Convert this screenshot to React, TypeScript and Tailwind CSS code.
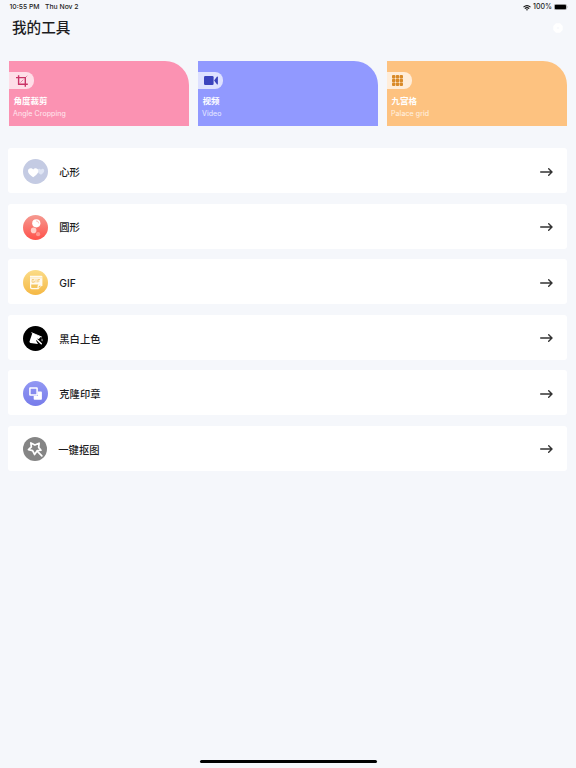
import type { ReactNode } from "react"

interface ToolCard {
    title: string
    subtitle: string
    color: string
    icon: ReactNode
}

interface ToolRow {
    title: string
    icon: ReactNode
    small?: boolean
}

const cards: ToolCard[] = [
    {
        title: "角度裁剪",
        subtitle: "Angle Cropping",
        color: "bg-[#fb92b2]",
        icon: (
            <svg className="ml-[7px] h-3 w-3" viewBox="0 0 12 12" fill="none" stroke="#c93468">
                <path d="M0 2.6h9.3v9.2M2.6.3v8.9h9.2" strokeWidth="1.4" />
                <path d="M4.4 7.6L7.4 4.6M10 2L11.3.7" strokeWidth=".5" />
            </svg>
        ),
    },
    {
        title: "视频",
        subtitle: "Video",
        color: "bg-[#9199ff]",
        icon: (
            <svg className="ml-[6px] h-[9px] w-[14px]" viewBox="0 0 14 9" fill="#3b43bd">
                <rect width="9.6" height="9" rx="1.2" />
                <path d="M10.1 4.5L12.9.8q1-.7 1 .5v6.4q0 1.2-1 .5z" />
            </svg>
        ),
    },
    {
        title: "九宫格",
        subtitle: "Palace grid",
        color: "bg-[#fdc280]",
        icon: (
            <svg className="ml-[5px] h-[11px] w-[11px]" viewBox="0 0 11 11" fill="#d98a28">
                {[0, 3.8, 7.6].map((y) =>
                    [0, 3.8, 7.6].map((x) => <rect key={`${x}-${y}`} x={x} y={y} width="3.4" height="3.4" rx="1" />)
                )}
            </svg>
        ),
    },
]

const rows: ToolRow[] = [
    {
        title: "心形",
        icon: (
            <>
                <circle cx="12.5" cy="12.5" r="12.5" fill="#c4cbe3" />
                <path d="M18 15.8c-2.2-1.6-3.6-2.7-3.6-4.3 0-2 2.4-2.6 3.6-.8 1.1-1.8 3.2-1 3.2.8 0 1.6-1.3 2.8-3.2 4.3z" fill="#dfe5f4" />
                <path d="M10.2 18.3C7.3 16 5 14.2 5 11.9c0-3 3.7-3.7 5.2-1.3 1.5-2.4 5.1-1.7 5.1 1.3 0 2.3-2.2 4.1-5.1 6.4z" fill="#fff" />
            </>
        ),
    },
    {
        title: "圆形",
        icon: (
            <>
                <linearGradient id="red" x1="0" y1="0" x2="0" y2="1">
                    <stop stopColor="#f59a91" />
                    <stop offset="1" stopColor="#ff514a" />
                </linearGradient>
                <circle cx="12.5" cy="12.5" r="12.5" fill="url(#red)" />
                <circle cx="13.3" cy="8.3" r="4.1" fill="#fff" />
                <path d="M13 5.9a2.6 2.6 0 0 1 2.7 2.5" fill="none" stroke="#f9a59d" strokeWidth=".7" />
                <circle cx="10.6" cy="15.4" r="2.8" fill="#ffd0ca" />
                <circle cx="15.1" cy="19.2" r="2.1" fill="#ff9891" />
            </>
        ),
    },
    {
        title: "GIF",
        icon: (
            <>
                <linearGradient id="yellow" x1="0" y1="0" x2="0" y2="1">
                    <stop stopColor="#fbdc88" />
                    <stop offset="1" stopColor="#f5b844" />
                </linearGradient>
                <circle cx="12.5" cy="12.5" r="12.5" fill="url(#yellow)" />
                <path d="M7 5.8h11.4q1 0 1 1v8.4l-4 4H8.7q-1.7 0-1.7-1.7z" fill="#fffaf0" />
                <path d="M6.6 7.8h12.8" stroke="#f8d57f" strokeWidth=".5" />
                <path d="M8.2 14.4h7.2q-.9.8-.9 2v1.7H9.3q-1.1 0-1.1-1.2z" fill="#f5c65e" />
                <path d="M15.7 18.2v-1.5q0-.9.9-.9h1.6z" fill="#f5c65e" />
                <path d="M11.3 9.5H9.1v2.8h2.2v-1.4h-.9M13 9.2v3.3M14.8 12.5v-3h2.2M14.8 11h1.7" fill="none" stroke="#f2be59" strokeWidth=".7" />
            </>
        ),
    },
    {
        title: "黑白上色",
        icon: (
            <>
                <circle cx="12.5" cy="12.5" r="12.5" fill="#000" />
                <path d="M9.4 7l8.6 3.8-4.6 4.4 1.6 2.9-7.6-1.2q-1.2-.3-.9-1.3z" fill="#fff" />
                <path d="M8.8 6.8l9.7 4.1" stroke="#fff" strokeWidth=".9" strokeLinecap="round" />
                <path d="M13.9 13.4l4.9 4.3" stroke="#000" strokeWidth="2.6" />
                <path d="M13.6 13.2l4.7 4.5" stroke="#fff" strokeWidth="1.5" strokeLinecap="round" />
                <path d="M18.9 12.3c1.3 1.6 1.3 2.7.2 3.2-1.1-.7-1.1-1.7-.2-3.2z" fill="#888" />
            </>
        ),
    },
    {
        title: "克隆印章",
        icon: (
            <>
                <linearGradient id="blue" x1="0" y1="0" x2="0" y2="1">
                    <stop stopColor="#9298f3" />
                    <stop offset="1" stopColor="#777cea" />
                </linearGradient>
                <circle cx="12.5" cy="12.5" r="12.5" fill="url(#blue)" />
                <rect x="6.9" y="6.9" width="7.2" height="7.2" rx=".4" fill="none" stroke="#fff" strokeWidth="1.5" />
                <path d="M14.9 10.6h3.2q.8 0 .8.8V18q0 .8-.8.8h-6.6q-.8 0-.8-.8v-3.1h4.2z" fill="#fff" />
            </>
        ),
    },
    {
        title: "一键抠图",
        small: true,
        icon: (
            <>
                <circle cx="12.5" cy="12.5" r="12.5" fill="#858585" />
                <path
                    d="M8.2 6.2l4.2 2.2 4.4-1.9-.5 4.3 2.4 3-3.9.4-2.8 4-2-4-4.3-1.1 3-2.9z"
                    fill="none"
                    stroke="#fff"
                    strokeWidth="1.8"
                    strokeLinejoin="round"
                />
                <path d="M14.8 14.8l4.8 4.8" stroke="#fff" strokeWidth="1.8" strokeLinecap="round" />
            </>
        ),
    },
]

function StatusBar() {
    return (
        <div className="flex h-[14px] items-center justify-between pt-[1px] pr-2 pl-[9.5px] text-[6.8px] font-medium text-[#222]">
            <div className="flex gap-[5.5px]">
                <span>10:55 PM</span>
                <span>Thu Nov 2</span>
            </div>
            <div className="flex items-center gap-[2px]">
                <svg className="h-[6px] w-[8px]" viewBox="0 0 8 6" fill="none" stroke="#111" strokeWidth="1.1">
                    <path d="M.5 2.1q3.5-3 7 0M1.8 3.6q2.2-1.9 4.4 0" />
                    <path d="M4 5.8L2.9 4.6q1.1-.8 2.2 0z" fill="#111" stroke="none" />
                </svg>
                <span className="text-[7px]">100%</span>
                <svg className="mb-[1px] h-[6px] w-[14px]" viewBox="0 0 14 6">
                    <rect x=".25" y=".25" width="12.3" height="5.5" rx="1.5" fill="none" stroke="#777" strokeWidth=".5" />
                    <rect x=".8" y=".7" width="11.2" height="4.6" rx="1" fill="#000" />
                    <path d="M13 2q1 1 0 2z" fill="#888" />
                </svg>
            </div>
        </div>
    )
}

export default function App() {
    return (
        <div className="flex h-screen flex-col overflow-hidden bg-[#f5f7fb] font-[Inter,'Noto_Sans_CJK_SC',sans-serif] text-[#1d1d1f]">
            <StatusBar />
            <header className="flex h-[28px] items-center justify-between pr-[13px] pl-[12px]">
                <h1 className="pt-[2px] text-[14.6px] font-medium">我的工具</h1>
                <svg className="h-[10px] w-[10px]" viewBox="0 0 10 10">
                    <path d="M3 .3h4L9.7 3v4L7 9.7H3L.3 7V3z" fill="#fff" />
                    <circle cx="5" cy="5" r="1.3" fill="#f9fafd" />
                </svg>
            </header>

            <div className="mt-[19px] grid h-[64.5px] shrink-0 grid-cols-3 gap-[9px] px-[9px]">
                {cards.map((card) => (
                    <div key={card.title} className={`rounded-tr-[24px] pt-[11px] text-white ${card.color}`}>
                        <div className="flex h-[17px] w-[25px] items-center rounded-r-[8px] bg-white/70">{card.icon}</div>
                        <div className="mt-[6px] pl-[4.5px] text-[8.5px] leading-[12px] font-bold">{card.title}</div>
                        <div className="mt-[1px] pl-[4px] text-[7px] leading-[11px] tracking-[0.1px] text-white/80">{card.subtitle}</div>
                    </div>
                ))}
            </div>

            <div className="mt-[22.5px] flex flex-col gap-[10.6px] pr-[9px] pl-[8px]">
                {rows.map((row) => (
                    <div key={row.title} className="flex h-[45px] items-center rounded-[3px] bg-white pt-[2px] pr-[14px] pl-[15px]">
                        <svg className={`shrink-0 ${row.small ? "mb-[1px] h-6 w-6" : "h-[25px] w-[25px]"}`} viewBox="0 0 25 25">
                            {row.icon}
                        </svg>
                        <span className="ml-[11.3px] flex-1 pt-[2px] text-[10.3px] font-medium">{row.title}</span>
                        <svg className="h-[8px] w-[13px]" viewBox="0 0 13 8" fill="none" stroke="#333" strokeWidth="1.4">
                            <path d="M.7 4h11.2M8.7.8L12 4 8.7 7.2" strokeLinecap="round" strokeLinejoin="round" />
                        </svg>
                    </div>
                ))}
            </div>

            <div className="mt-auto mb-[5px] h-[3px] w-[177px] self-center rounded-full bg-black" />
        </div>
    )
}
